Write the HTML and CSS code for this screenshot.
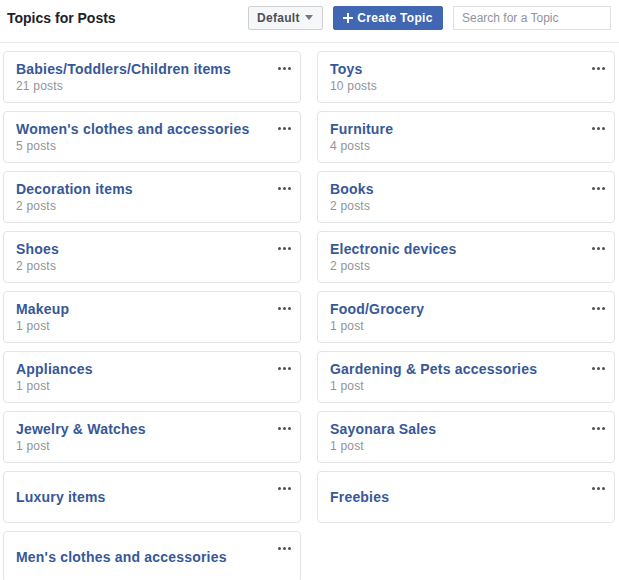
FILE: index.html
```html
<!DOCTYPE html>
<html lang="en">
<head>
<meta charset="utf-8">
<title>Topics for Posts</title>
<link rel="stylesheet" href="styles.css">
</head>
<body>
<div class="topics">
	<div class="topics-head">
		<h2 class="topics-title">Topics for Posts</h2>
		<div class="topics-tools">
			<button class="btn btn-default" type="button">Default <span class="caret"></span></button>
			<button class="btn btn-primary" type="button">
				<svg class="plus" width="10" height="10" viewBox="0 0 10 10"><path d="M5 0v10M0 5h10" stroke="#fff" stroke-width="2"/></svg>
				Create Topic
			</button>
			<input class="search" type="text" placeholder="Search for a Topic">
		</div>
	</div>

	<div class="topic-grid">
		<div class="topic"><a class="topic-name">Babies/Toddlers/Children items</a><span class="topic-count">21 posts</span><span class="more"><i></i><i></i><i></i></span></div>
		<div class="topic"><a class="topic-name">Toys</a><span class="topic-count">10 posts</span><span class="more"><i></i><i></i><i></i></span></div>
		<div class="topic"><a class="topic-name">Women's clothes and accessories</a><span class="topic-count">5 posts</span><span class="more"><i></i><i></i><i></i></span></div>
		<div class="topic"><a class="topic-name">Furniture</a><span class="topic-count">4 posts</span><span class="more"><i></i><i></i><i></i></span></div>
		<div class="topic"><a class="topic-name">Decoration items</a><span class="topic-count">2 posts</span><span class="more"><i></i><i></i><i></i></span></div>
		<div class="topic"><a class="topic-name">Books</a><span class="topic-count">2 posts</span><span class="more"><i></i><i></i><i></i></span></div>
		<div class="topic"><a class="topic-name">Shoes</a><span class="topic-count">2 posts</span><span class="more"><i></i><i></i><i></i></span></div>
		<div class="topic"><a class="topic-name">Electronic devices</a><span class="topic-count">2 posts</span><span class="more"><i></i><i></i><i></i></span></div>
		<div class="topic"><a class="topic-name">Makeup</a><span class="topic-count">1 post</span><span class="more"><i></i><i></i><i></i></span></div>
		<div class="topic"><a class="topic-name">Food/Grocery</a><span class="topic-count">1 post</span><span class="more"><i></i><i></i><i></i></span></div>
		<div class="topic"><a class="topic-name">Appliances</a><span class="topic-count">1 post</span><span class="more"><i></i><i></i><i></i></span></div>
		<div class="topic"><a class="topic-name">Gardening &amp; Pets accessories</a><span class="topic-count">1 post</span><span class="more"><i></i><i></i><i></i></span></div>
		<div class="topic"><a class="topic-name">Jewelry &amp; Watches</a><span class="topic-count">1 post</span><span class="more"><i></i><i></i><i></i></span></div>
		<div class="topic"><a class="topic-name">Sayonara Sales</a><span class="topic-count">1 post</span><span class="more"><i></i><i></i><i></i></span></div>
		<div class="topic"><a class="topic-name">Luxury items</a><span class="more"><i></i><i></i><i></i></span></div>
		<div class="topic"><a class="topic-name">Freebies</a><span class="more"><i></i><i></i><i></i></span></div>
		<div class="topic"><a class="topic-name">Men's clothes and accessories</a><span class="more"><i></i><i></i><i></i></span></div>
	</div>
</div>
</body>
</html>
```

FILE: styles.css
```css
body {
	margin: 0;
	background: #fff;
	font-family: "Liberation Sans", Arial, sans-serif;
	color: #1d2129;
}

.topics-head {
	display: flex;
	align-items: center;
	height: 43px;
	box-sizing: border-box;
	padding: 0 8px 7px 7px;
	border-bottom: 1px solid #e5e6e9;
}
.topics-title {
	margin: 0;
	font-size: 14px;
	font-weight: bold;
}
.topics-tools {
	display: flex;
	align-items: center;
	gap: 10px;
	margin-left: auto;
}

.btn {
	display: flex;
	align-items: center;
	height: 24px;
	padding: 0 8px;
	border-radius: 2px;
	font-family: inherit;
	font-size: 12px;
	font-weight: bold;
	letter-spacing: 0.3px;
	white-space: nowrap;
	cursor: pointer;
}
.btn-default {
	width: 75px;
	background: #f6f7f9;
	border: 1px solid #ced0d4;
	color: #4b4f56;
}
.btn-primary {
	width: 110px;
	gap: 4px;
	justify-content: center;
	padding: 0 4px;
	background: #4267b2;
	border: 1px solid #4267b2;
	color: #fff;
}
.caret {
	margin-left: 5px;
	border-left: 4px solid transparent;
	border-right: 4px solid transparent;
	border-top: 5px solid #737780;
}
.search {
	width: 158px;
	height: 24px;
	box-sizing: border-box;
	padding: 0 8px;
	border: 1px solid #dddfe2;
	font-family: inherit;
	font-size: 12px;
}
.search::placeholder {color: #90949c;}

.topic-grid {
	display: grid;
	grid-template-columns: 298px 298px;
	column-gap: 16px;
	row-gap: 8px;
	padding: 8px 0 0 3px;
}
.topic {
	position: relative;
	display: flex;
	flex-direction: column;
	justify-content: center;
	height: 52px;
	box-sizing: border-box;
	padding: 0 12px;
	border: 1px solid #e3e4e8;
	border-radius: 4px;
}
.topic-name {
	font-size: 14px;
	font-weight: bold;
	line-height: 18px;
	letter-spacing: 0.2px;
	color: #365899;
}
.topic-count {
	font-size: 12px;
	line-height: 16px;
	letter-spacing: 0.2px;
	color: #90949c;
}
.more {
	position: absolute;
	top: 15px;
	right: 9px;
	display: flex;
	gap: 2px;
}
.more i {
	width: 3px;
	height: 3px;
	border-radius: 50%;
	background: #4b4f56;
}
```
